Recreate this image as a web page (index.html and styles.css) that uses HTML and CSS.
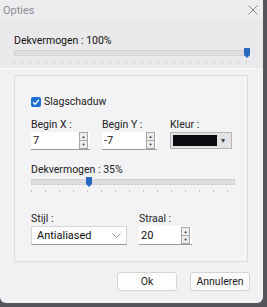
FILE: index.html
```html
<!DOCTYPE html>
<html lang="nl">
<head>
    <meta charset="UTF-8">
    <title>Opties</title>
    <link rel="stylesheet" href="styles.css">
</head>
<body>
    <div class="window">
        <div class="titlebar">
            <span class="title">Opties</span>
            <svg class="close" width="10" height="10" viewBox="0 0 10 10"><path d="M0.5 0.5 L9.5 9.5 M9.5 0.5 L0.5 9.5" stroke="#8a8a8e" stroke-width="1"/></svg>
        </div>
        <div class="top-panel">
            <div class="label strong">Dekvermogen : 100%</div>
            <div class="slider wide">
                <div class="track"></div>
                <div class="thumb" style="left: calc(100% - 6px)"></div>
                <div class="ticks"></div>
            </div>
        </div>
        <div class="group">
            <label class="check-row">
                <span class="checkbox">
                    <svg width="8" height="8" viewBox="0 0 8 8"><path d="M1 4.2 L3.1 6.2 L7 1.8" fill="none" stroke="#fff" stroke-width="1.3"/></svg>
                </span>
                Slagschaduw
            </label>
            <div class="fields">
                <div class="field f-x">
                    <div class="label">Begin X :</div>
                    <div class="spin"><span class="value">7</span><span class="arrows"><i>▲</i><i>▼</i></span></div>
                </div>
                <div class="field f-y">
                    <div class="label">Begin Y :</div>
                    <div class="spin"><span class="value">-7</span><span class="arrows"><i>▲</i><i>▼</i></span></div>
                </div>
                <div class="field f-color">
                    <div class="label">Kleur :</div>
                    <div class="colorbox"><span class="swatch"></span><span class="drop">▾</span></div>
                </div>
            </div>
            <div class="label second">Dekvermogen : 35%</div>
            <div class="slider narrow">
                <div class="track"></div>
                <div class="thumb" style="left: 55px"></div>
                <div class="ticks"></div>
            </div>
            <div class="fields lower">
                <div class="field f-style">
                    <div class="label">Stijl :</div>
                    <div class="combo"><span class="value">Antialiased</span>
                        <svg width="9" height="5" viewBox="0 0 9 5"><path d="M0.5 0.5 L4.5 4.5 L8.5 0.5" fill="none" stroke="#9a9a9a" stroke-width="1"/></svg>
                    </div>
                </div>
                <div class="field f-radius">
                    <div class="label">Straal :</div>
                    <div class="spin"><span class="value">20</span><span class="arrows"><i>▲</i><i>▼</i></span></div>
                </div>
            </div>
        </div>
        <div class="footer">
            <button class="btn ok">Ok</button>
            <button class="btn">Annuleren</button>
        </div>
    </div>
</body>
</html>
```

FILE: styles.css
```css
body {
    margin: 0;
    background-color: #55555c;
    font-family: Roboto, "Liberation Sans", sans-serif;
    font-size: 10.5px;
    color: #222;
    height: 307px;
    overflow: hidden;
}
.window {
    width: 263px;
    height: 303px;
    background-color: #f1f1f3;
    border-radius: 0 0 6px 6px;
    overflow: hidden;
}
.titlebar {
    height: 20px;
    display: flex;
    align-items: center;
    justify-content: space-between;
    padding: 0 5px 0 3px;
    background-color: #ededf0;
}
.title {
    color: #8c8c92;
    font-size: 11px;
}
.top-panel {
    height: 49px;
    padding: 14px 13px 0 14px;
    box-sizing: border-box;
    background-color: #e9e9ec;
    border-bottom: 1px solid #f8f8fa;
}
.label {
    line-height: 14px;
    color: #222;
}
.label.strong {
    color: #111;
}
.slider {
    position: relative;
    height: 15px;
    margin-top: 2px;
}
.slider.wide {
    width: 236px;
}
.slider.narrow {
    width: 204px;
}
.track {
    height: 6px;
    background-color: #dededf;
    border: 1px solid #d2d2d4;
    box-sizing: border-box;
}
.thumb {
    position: absolute;
    top: -2px;
    width: 6px;
    height: 10px;
    background-color: #2a67c0;
    clip-path: polygon(0 0, 100% 0, 100% 70%, 50% 100%, 0 70%);
}
.ticks {
    height: 2px;
    margin-top: 5px;
    background-image: repeating-linear-gradient(90deg, #c4c4c6 0 1px, transparent 1px 8px);
}
.slider.narrow .ticks {
    background-image: repeating-linear-gradient(90deg, #c4c4c6 0 1px, transparent 1px 14px);
}
.group {
    margin: 6px 0 0 14px;
    width: 234px;
    height: 187px;
    border: 1px solid #dcdcde;
    box-sizing: border-box;
    padding: 20px 0 0 16px;
    background-color: #f3f3f5;
}
.check-row {
    display: flex;
    align-items: center;
    gap: 3px;
    height: 11px;
    color: #222;
}
.checkbox {
    width: 10px;
    height: 10px;
    border-radius: 2px;
    background-color: #1d6fd6;
    display: flex;
    align-items: center;
    justify-content: center;
}
.fields {
    display: flex;
    margin-top: 11px;
}
.f-x { width: 71px; }
.f-y { width: 68px; }
.f-style { width: 108px; }
.spin {
    height: 17px;
    display: flex;
    align-items: center;
    justify-content: space-between;
    background-color: #fff;
    border-bottom: 1px solid #9a9a9e;
    padding-left: 2px;
}
.f-x .spin { width: 57px; }
.f-y .spin { width: 53px; }
.f-radius .spin { width: 51px; height: 18px; }
.value {
    font-size: 11px;
    color: #111;
}
.arrows {
    display: flex;
    flex-direction: column;
    width: 7px;
    margin-right: 2px;
    border: 1px solid #a8a8a8;
    background-color: #ececec;
}
.arrows i {
    font-style: normal;
    font-size: 4px;
    line-height: 7px;
    height: 7px;
    text-align: center;
    color: #333;
}
.arrows i + i {
    border-top: 1px solid #a8a8a8;
}
.colorbox {
    width: 62px;
    height: 17px;
    display: flex;
    border: 1px solid #b4b4b6;
    background-color: #e3e3e5;
    padding: 2px;
    box-sizing: border-box;
}
.swatch {
    flex: 1;
    background-color: #0c0c10;
}
.drop {
    width: 12px;
    font-size: 8px;
    line-height: 11px;
    text-align: center;
    color: #444;
}
.label.second {
    margin-top: 13px;
}
.fields.lower {
    margin-top: 18px;
}
.combo {
    width: 96px;
    height: 19px;
    display: flex;
    align-items: center;
    justify-content: space-between;
    padding: 0 5px;
    box-sizing: border-box;
    background-color: #fff;
    border: 1px solid #d6d6d8;
    border-bottom-color: #9a9a9e;
}
.footer {
    display: flex;
    justify-content: flex-end;
    gap: 13px;
    padding: 10px 13px 0 0;
}
.btn {
    width: 60px;
    height: 19px;
    padding: 0;
    font-family: Roboto, "Liberation Sans", sans-serif;
    font-size: 10.5px;
    color: #222;
    background-color: #fdfdfd;
    border: 1px solid #d4d4d6;
    border-radius: 3px;
}
```
